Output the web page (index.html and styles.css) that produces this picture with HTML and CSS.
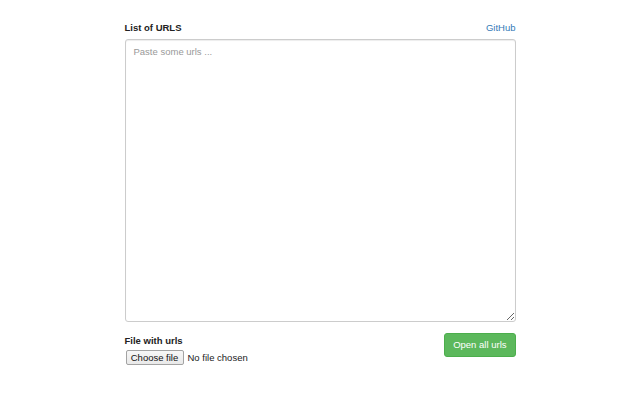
FILE: index.html
```html
<!DOCTYPE html>
<html>
<head>
<meta charset="utf-8">
<link rel="stylesheet" href="styles.css">
</head>
<body>
<div class="container">
  <div class="head-row">
    <label class="lbl" for="urls">List of URLS</label>
    <a class="gh" href="#">GitHub</a>
  </div>
  <textarea id="urls" class="urls" placeholder="Paste some urls ..."></textarea>
  <div class="foot-row">
    <div class="file-group">
      <span class="lbl">File with urls</span>
      <div class="file-ctl">
        <input id="file" class="file" type="file">
        <label class="file-btn" for="file">Choose file</label>
        <span class="file-name">No file chosen</span>
      </div>
    </div>
    <button class="btn-open" type="button">Open all urls</button>
  </div>
</div>
</body>
</html>
```
FILE: styles.css
```css
html, body {
  margin: 0;
  padding: 0;
  background: #fff;
}
body {
  font-family: "Liberation Sans", Arial, sans-serif;
  font-size: 9.5px;
  line-height: 14px;
  color: #333;
}
.container {
  width: 391px;
  margin: 0 auto;
  padding-top: 21px;
}
.head-row {
  display: flex;
  justify-content: space-between;
  align-items: baseline;
  margin-bottom: 4px;
}
.lbl {
  font-weight: bold;
  color: #222;
  display: block;
}
.gh {
  color: #337ab7;
  text-decoration: none;
}
.urls {
  display: block;
  box-sizing: border-box;
  width: 391px;
  height: 283px;
  margin: 0;
  padding: 5px 8px;
  border: 1px solid #ccc;
  border-radius: 3px;
  box-shadow: inset 0 1px 1px rgba(0,0,0,0.075);
  font-family: "Liberation Sans", Arial, sans-serif;
  font-size: 9.5px;
  line-height: 14px;
  color: #555;
  resize: vertical;
}
.urls::placeholder {
  color: #999;
}
.foot-row {
  display: flex;
  justify-content: space-between;
  align-items: flex-start;
  margin-top: 11px;
}
.file-group {
  padding-top: 1px;
}
.file-ctl {
  display: flex;
  align-items: center;
  gap: 4px;
  margin-top: 2px;
  padding-left: 1px;
  color: #222;
}
.file {
  display: none;
}
.file-btn {
  box-sizing: border-box;
  width: 58px;
  height: 15px;
  line-height: 13px;
  text-align: center;
  border: 1px solid #a3a3a3;
  border-radius: 2px;
  background: linear-gradient(#f7f7f7, #e9e9e9);
  color: #111;
}
.btn-open {
  box-sizing: border-box;
  height: 24px;
  padding: 4px 8px;
  border: 1px solid #4cae4c;
  border-radius: 3px;
  background: #5cb85c;
  color: #fff;
  font-family: "Liberation Sans", Arial, sans-serif;
  font-size: 9.5px;
  line-height: 14px;
  cursor: pointer;
}
```
